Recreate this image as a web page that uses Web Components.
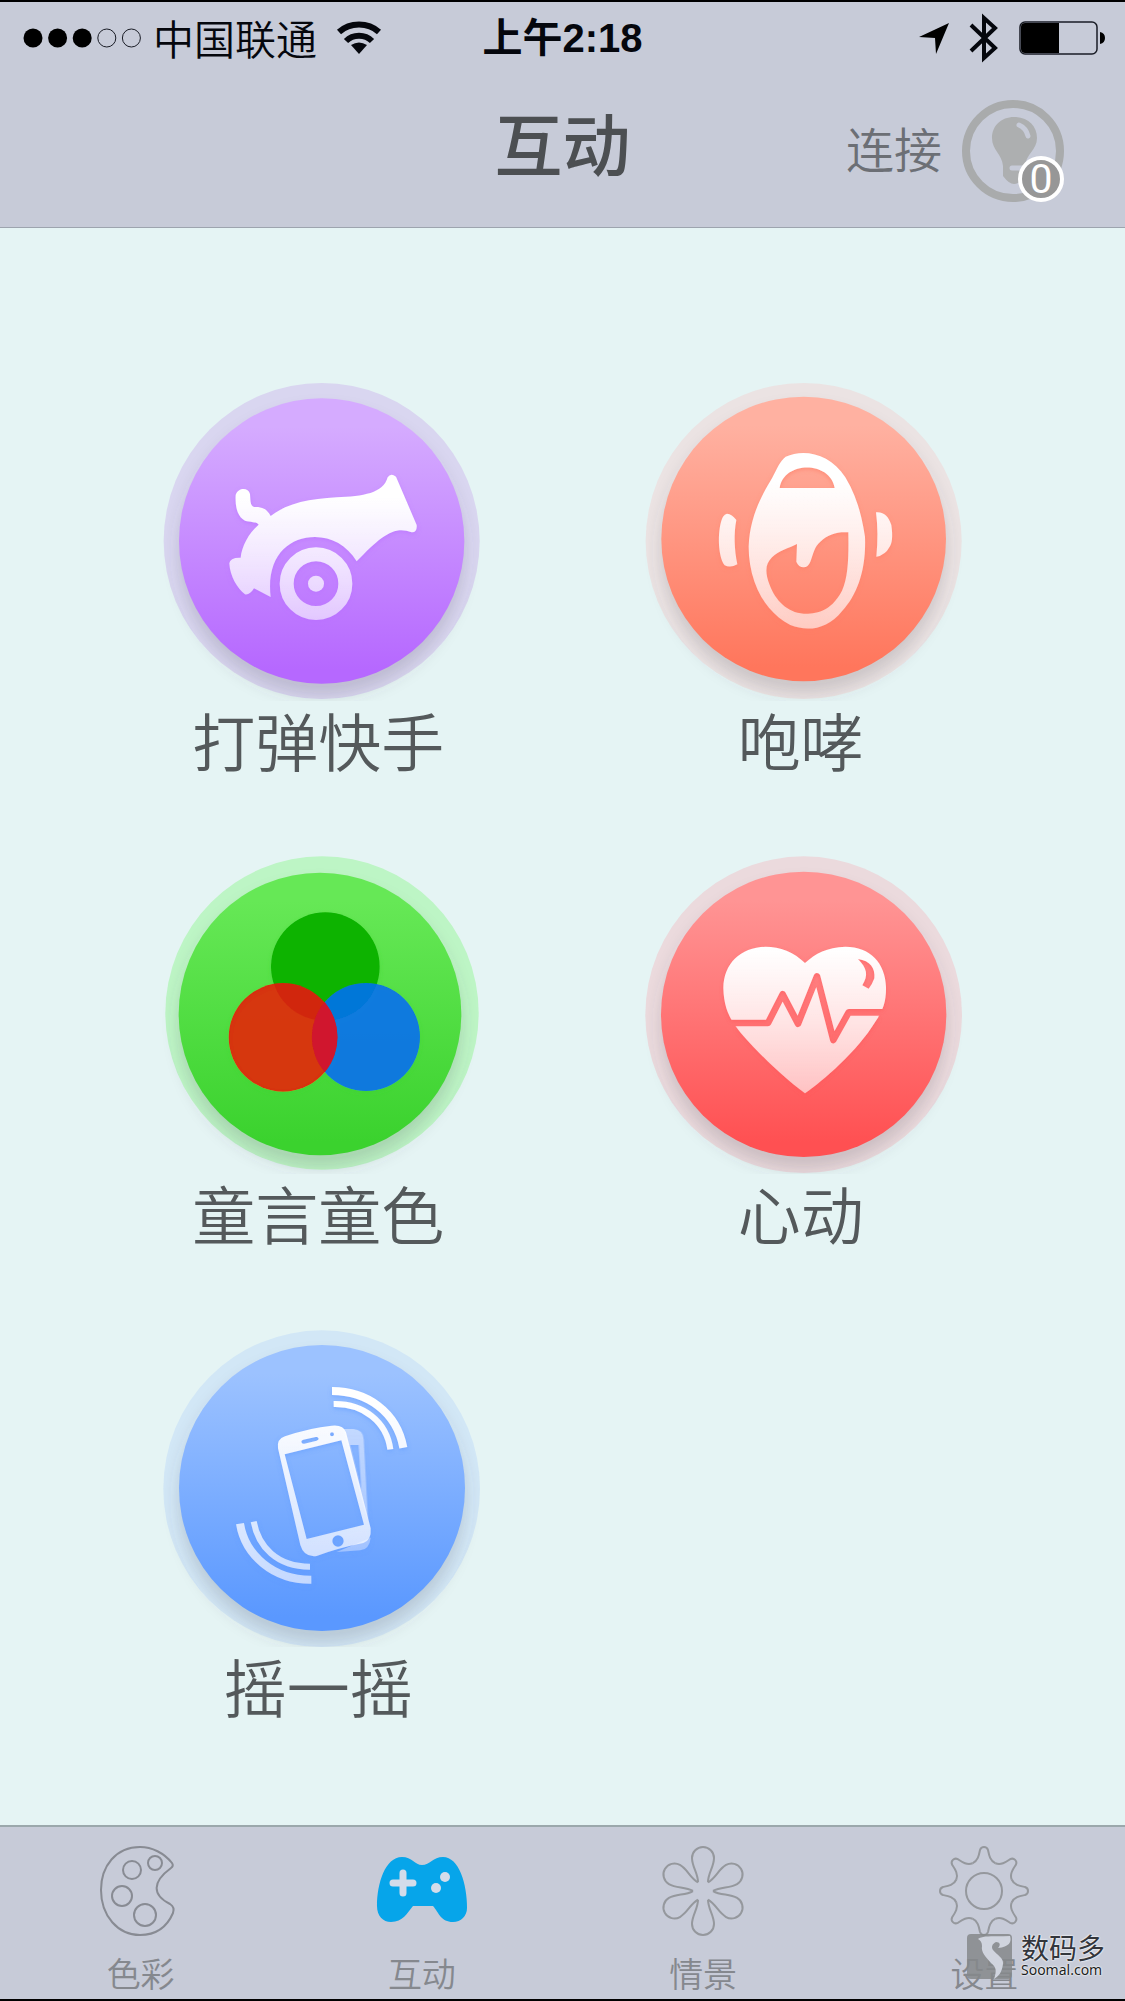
<!DOCTYPE html>
<html lang="zh-CN">
<head>
<meta charset="utf-8">
<meta name="viewport" content="width=device-width, initial-scale=1">
<title>互动</title>
<style>
    body {
        margin: 0;
        background: #000;
        font-family: "Noto Sans CJK SC", "Liberation Sans", sans-serif;
    }
</style>
</head>
<body>
<app-screen>
    <status-bar slot="top" carrier="中国联通" time="上午2:18"></status-bar>
    <nav-bar slot="top" count="0">
        互动
        <span slot="action">连接</span>
    </nav-bar>
    <game-tile icon="cannon">打弹快手</game-tile>
    <game-tile icon="roar">咆哮</game-tile>
    <game-tile icon="colors">童言童色</game-tile>
    <game-tile icon="heart">心动</game-tile>
    <game-tile icon="shake">摇一摇</game-tile>
    <tab-item slot="tabs" icon="palette">色彩</tab-item>
    <tab-item slot="tabs" icon="gamepad" active>互动</tab-item>
    <tab-item slot="tabs" icon="flower">情景</tab-item>
    <tab-item slot="tabs" icon="gear">设置</tab-item>
    <site-mark slot="mark" site="Soomal.com">数码多</site-mark>
</app-screen>

<script>
const spin = (d, n) => Array.from({length: n}, (_, i) =>
    `<path d="${d}" transform="rotate(${i * 360 / n})"/>`).join('')

// art for the round tiles: box, ring and disc are [cx, cy, r]
const tiles = {
    cannon: {
        box: '36 39 954 954', ring: [515, 513, 474], disc: [515, 513, 428],
        halo: '#d9d6f0', from: '#d5abff', to: '#b668ff', fade: [380, 760],
        art: `
            <path fill="url(#ink)" d="M362 438C410 400 480 386 560 382C640 379 700 370 713 322Q722 308 738 320L800 465Q802 488 785 487C735 466 695 495 620 574C590 525 545 501 495 501C415 501 348 560 362 681L312 655Q300 675 285 673C262 655 240 620 238 580Q240 562 272 563C275 530 295 490 326 464C320 455 300 456 285 452C262 440 255 410 257 375C265 352 295 352 300 372C302 395 300 405 312 411C335 410 350 415 362 438Z"/>
            <circle cx="498" cy="641" r="88" fill="none" stroke="url(#ink)" stroke-width="42"/>
            <circle cx="498" cy="641" r="24" fill="url(#ink)"/>`
    },
    roar: {
        box: '44 39 954 954', ring: [520, 513, 474], disc: [520, 507, 427],
        halo: '#ebe3e3', from: '#ffb1a1', to: '#ff765c', fade: [330, 790],
        art: `
            <path fill="url(#ink)" fill-rule="evenodd" d="M466 260C520 235 600 250 645 322C680 380 695 440 704 500C708 600 680 675 636 722C590 780 530 785 480 765C400 725 355 630 355 530C358 440 395 375 425 325C440 295 450 272 466 260Z
                M448 354C460 272 600 272 613 354Z
                M500 522L498 575Q505 592 520 592Q533 592 540 575C550 550 552 530 570 515C595 492 620 485 654 487C655 550 655 620 635 662C600 728 555 731 520 731C470 728 435 690 418 645C403 605 405 582 425 562C445 542 475 535 500 522Z"/>
            <path fill="url(#ink)" d="M290 431Q305 432 318 450C310 490 312 540 321 583Q300 595 283 586C260 555 262 470 278 440Q283 432 290 431Z"/>
            <path fill="url(#ink)" d="M737 427C762 425 775 440 783 465C788 500 785 520 778 530Q765 555 738 560Q745 490 737 427Z"/>`
    },
    colors: {
        box: '36 48 954 954', ring: [516, 519, 470], disc: [510, 522, 424],
        halo: '#bdf5c5', from: '#66e856', to: '#3bd22e', fade: [300, 760],
        art: `
            <circle cx="526" cy="380" r="163" fill="#10b303"/>
            <circle cx="648" cy="591" r="162" fill="#0573e6" fill-opacity=".94"/>
            <circle cx="399" cy="592" r="163" fill="#dc2109" fill-opacity=".95"/>
            <path fill="#d0152e" d="M524 486A163 163 0 0 1 524 696A162 162 0 0 1 524 486Z"/>`
    },
    heart: {
        box: '44 48 954 954', ring: [520, 524, 475], disc: [520, 523, 428],
        halo: '#ebdadd', from: '#ff9494', to: '#ff5052', fade: [330, 790],
        art: `
            <mask id="pulse">
                <path fill="#fff" d="M0 0H1000V1000H0Z"/>
                <path fill="none" stroke="#000" stroke-width="20" stroke-linejoin="round" d="M270 549H413L457 463L503 551L560 409L609 600L655 517H800"/>
                <path d="M683 357C720 362 735 385 732 415Q725 435 715 446L696 436C715 405 710 385 683 357Z"/>
            </mask>
            <path fill="url(#ink)" mask="url(#pulse)" d="M524 369C490 335 450 320 405 320C330 322 280 370 279 445C281 520 310 555 350 600C410 665 470 720 524 760C580 720 680 635 735 545C760 510 768 480 767 440C765 370 720 320 645 320C590 322 555 340 524 369Z"/>`
    },
    shake: {
        box: '36 42 954 954', ring: [515, 521, 475], disc: [516, 519, 429],
        halo: '#d2e7f6', from: '#9cc2ff', to: '#5a98ff', fade: [260, 860],
        art: `
            <g fill="url(#ink)" fill-rule="evenodd">
                <path opacity=".5" d="M580 342H610Q640 344 641 374L654 615L640 570L590 380ZM600 390H626L634 525Z"/>
                <path opacity=".5" d="M560 711L662 668Q658 704 630 706Z"/>
                <path d="M384 400Q380 372 405 364Q480 338 545 332Q580 328 588 352L662 640Q665 676 640 684Q560 700 500 723Q462 728 451 690ZM404 418L470 672L642 629L574 376ZM454 380Q455 388 463 386L500 377Q508 374 505 369Q503 365 497 366L460 374Q454 375 454 380ZM540 358A6 6 0 0 0 552 358A6 6 0 0 0 540 358ZM547 678A17 17 0 0 0 581 678A17 17 0 0 0 547 678Z"/>
            </g>
            <g fill="none" stroke="url(#ink)">
                <path stroke-width="24" d="M546 228C650 228 740 290 760 398M270 626C285 720 370 795 484 794"/>
                <path stroke-width="18" d="M551 267C640 265 710 320 721 403M311 620C325 695 380 755 480 755"/>
            </g>`
    }
}

const tabIcons = {
    palette: `
        <g fill="none" stroke="#888b93" stroke-width="2" transform="translate(-2 0)">
            <path d="M78 17C70 7 58 1 46 1C22 1 7 20 7 44C7 70 24 89 46 89C62 89 73 81 79 67Q81 61 76 58C58 49 58 36 77 22Q80 20 78 17Z"/>
            <circle cx="38" cy="24" r="9"/>
            <circle cx="61" cy="17" r="7"/>
            <circle cx="28" cy="50" r="10"/>
            <circle cx="51" cy="69" r="11"/>
        </g>`,
    gamepad: `
        <path fill="#06a5ea" d="M25 11C35 11 38 19 45 19C53 19 56 11 66 11C82 11 90 38 90 62C90 70 84 76 76 76C64 76 62 67 56 60H36C30 67 26 76 14 76C6 76 0 70 0 60C0 38 8 11 25 11Z"/>
        <path fill="none" stroke="#d3dcea" stroke-width="7" stroke-linecap="round" d="M26 27V47M16 37H36"/>
        <circle cx="68" cy="31" r="5" fill="#d3dcea"/>
        <circle cx="59" cy="42" r="5" fill="#d3dcea"/>`,
    flower: `
        <g fill="none" stroke="#95989d" stroke-width="2" transform="translate(45 45)">
            ${spin('M-5 -8.7C-5 -18 -11 -24 -11 -33A11 11 0 0 1 11 -33C11 -24 5 -18 5 -8.7', 6)}
        </g>`,
    gear: `
        <g fill="none" stroke="#95989d" stroke-width="2" transform="translate(45 45)">
            <circle r="18"/>
            ${spin('M-11.5 -27.7C-6 -30 -5 -36 -4 -41Q-3 -44 0 -44Q3 -44 4 -41C5 -36 6 -30 11.5 -27.7', 8)}
        </g>`
}

class AppScreen extends HTMLElement {
    constructor() {
        super();
        this.attachShadow({mode: 'open'});
    }
    getStyle(){
        return `
            <style>
            :host {
                display: flex;
                flex-direction: column;
                box-sizing: border-box;
                min-height: 100vh;
                position: relative;
                border-top: 2px solid #000;
                border-bottom: 2px solid #000;
                background: #e5f4f4;
            }
            header {
                background: #c7cbd8;
                border-bottom: 1px solid #9da4ae;
            }
            main {
                flex: 1;
                display: grid;
                grid-template-columns: 1fr 1fr;
                align-content: start;
                row-gap: 79px;
                padding: 155px 80px 79px;
            }
            footer {
                display: grid;
                grid-template-columns: repeat(4, 1fr);
                background: #c7cbd8;
                border-top: 2px solid #9ba8ac;
            }
            </style>
        `;
    }
    connectedCallback(){
        this.shadowRoot.innerHTML = `
            ${this.getStyle()}
            <header><slot name="top"></slot></header>
            <main><slot></slot></main>
            <footer><slot name="tabs"></slot></footer>
            <slot name="mark"></slot>
        `;
    }
}
customElements.define('app-screen', AppScreen);

class StatusBar extends HTMLElement {
    constructor() {
        super();
        this.attachShadow({mode: 'open'});
    }
    getStyle(){
        return `
            <style>
            :host {
                display: grid;
                grid-template-columns: 1fr auto 1fr;
                align-items: center;
                height: 72px;
                padding: 0 20px;
                color: #05070d;
            }
            div {
                display: flex;
                align-items: center;
            }
            svg {
                display: block;
                overflow: visible;
            }
            .carrier {
                font-size: 41px;
                font-weight: 350;
                line-height: 68px;
                margin: 0 20px 0 11px;
                padding-bottom: 2px;
            }
            .time {
                font-family: "Liberation Sans", "Noto Sans CJK SC", sans-serif;
                font-size: 40px;
                font-weight: 700;
                line-height: 72px;
            }
            .right {
                justify-content: flex-end;
                gap: 21px;
            }
            </style>
        `;
    }
    connectedCallback(){
        const dots = [0, 1, 2, 3, 4].map(i => i < 3
            ? `<circle cx="${13 + i * 24.6}" cy="10" r="9.5"/>`
            : `<circle cx="${13 + i * 24.6}" cy="10" r="9" fill="none" stroke="#1a1d26"/>`).join('')
        this.shadowRoot.innerHTML = `
            ${this.getStyle()}
            <div>
                <svg width="122" height="20">${dots}</svg>
                <span class="carrier">${this.getAttribute('carrier')}</span>
                <svg width="44" height="34" fill="none" stroke="#05070d" stroke-width="6">
                    <path d="M2 11C13 1 31 1 42 11M9 20C16 13 28 13 35 20"/>
                    <path fill="#05070d" stroke="none" d="M14 24Q22 19 30 24L22 33Z"/>
                </svg>
            </div>
            <div class="time">${this.getAttribute('time')}</div>
            <div class="right">
                <svg width="30" height="31"><path d="M30 0L17 31L16 15L0 14Z"/></svg>
                <svg width="28" height="48"><path fill="none" stroke="#05070d" stroke-width="4" d="M1 11L25 34L14 44V4L25 14L1 37"/></svg>
                <svg width="86" height="34">
                    <rect x="1" y="1" width="77" height="32" rx="5" fill="none" stroke="#1a1d26" stroke-width="1.5"/>
                    <path d="M6 2H40V32H6Q2 32 2 28V6Q2 2 6 2ZM81 11Q86 12 86 17Q86 22 81 23Z"/>
                </svg>
            </div>
        `;
    }
}
customElements.define('status-bar', StatusBar);

class NavBar extends HTMLElement {
    constructor() {
        super();
        this.attachShadow({mode: 'open'});
    }
    getStyle(){
        return `
            <style>
            :host {
                display: grid;
                grid-template-columns: 1fr auto 1fr;
                align-items: center;
                height: 153px;
                padding: 0 61px;
            }
            h1 {
                grid-column: 2;
                margin: 0;
                padding-bottom: 18px;
                font-size: 68px;
                font-weight: 500;
                line-height: 80px;
                color: #4c4f52;
            }
            button {
                justify-self: end;
                display: flex;
                align-items: center;
                gap: 20px;
                padding: 0;
                border: 0;
                background: none;
                font: inherit;
                font-size: 48px;
                font-weight: 350;
                line-height: 60px;
                color: #6c6f75;
            }
            .label {
                padding-bottom: 8px;
            }
            .bulb {
                position: relative;
                height: 102px;
            }
            .badge {
                position: absolute;
                right: 0;
                bottom: 0;
                width: 38px;
                height: 38px;
                border: 4px solid #fff;
                border-radius: 50%;
                background: #979797;
                color: #fff;
                font-family: Roboto, "Liberation Sans", sans-serif;
                font-size: 41px;
                font-weight: 400;
                line-height: 38px;
                text-align: center;
            }
            </style>
        `;
    }
    connectedCallback(){
        this.shadowRoot.innerHTML = `
            ${this.getStyle()}
            <h1><slot></slot></h1>
            <button type="button">
                <span class="label"><slot name="action"></slot></span>
                <span class="bulb">
                    <svg width="102" height="102" fill="none">
                        <circle cx="51" cy="51" r="47" stroke="#a9abac" stroke-width="8"/>
                        <path fill="#adafb0" d="M52 17C39 17 30 26 30 38C30 50 40 54 41 66V76Q47 84 52 84Q58 84 63 76V66C64 54 75 50 75 38C75 26 66 17 52 17Z"/>
                        <path stroke="#c7cbd8" stroke-width="5" stroke-linecap="round" d="M57 25Q64 28 66 36M50 68H62"/>
                    </svg>
                    <span class="badge">${this.getAttribute('count')}</span>
                </span>
            </button>
        `;
    }
}
customElements.define('nav-bar', NavBar);

class GameTile extends HTMLElement {
    constructor() {
        super();
        this.attachShadow({mode: 'open'});
    }
    getStyle(){
        return `
            <style>
            :host {
                display: flex;
                justify-content: center;
            }
            button {
                display: flex;
                flex-direction: column;
                align-items: center;
                padding: 0;
                border: 0;
                background: none;
                font: inherit;
                font-size: 63px;
                font-weight: 350;
                line-height: 76px;
                color: #54595b;
            }
            svg {
                display: block;
                width: 318px;
                height: 318px;
            }
            .label {
                padding-right: 6px;
            }
            </style>
        `;
    }
    connectedCallback(){
        const t = tiles[this.getAttribute('icon')]
        const circle = ([x, y, r], rest) => `<circle cx="${x}" cy="${y}" r="${r}" ${rest}/>`
        this.shadowRoot.innerHTML = `
            ${this.getStyle()}
            <button type="button">
                <svg viewBox="${t.box}">
                    <defs>
                        <linearGradient id="disc" x2="0" y2="1">
                            <stop offset=".1" stop-color="${t.from}"/>
                            <stop offset=".95" stop-color="${t.to}"/>
                        </linearGradient>
                        <linearGradient id="ink" gradientUnits="userSpaceOnUse" x1="0" x2="0" y1="${t.fade[0]}" y2="${t.fade[1]}">
                            <stop offset="0" stop-color="#fff"/>
                            <stop offset="1" stop-color="#fff" stop-opacity=".55"/>
                        </linearGradient>
                        <filter id="soft" x="-20%" y="-20%" width="140%" height="140%">
                            <feGaussianBlur stdDeviation="24"/>
                        </filter>
                        <filter id="lift">
                            <feDropShadow dx="0" dy="6" stdDeviation="6" flood-color="${t.to}" flood-opacity=".5"/>
                        </filter>
                    </defs>
                    ${circle(t.ring, `fill="${t.halo}"`)}
                    <g transform="translate(0 36)">${circle(t.disc, 'fill="#4a4a5a" fill-opacity=".2" filter="url(#soft)"')}</g>
                    ${circle(t.disc, 'fill="url(#disc)"')}
                    <g filter="url(#lift)">${t.art}</g>
                </svg>
                <span class="label"><slot></slot></span>
            </button>
        `;
    }
}
customElements.define('game-tile', GameTile);

class TabItem extends HTMLElement {
    constructor() {
        super();
        this.attachShadow({mode: 'open'});
    }
    getStyle(){
        return `
            <style>
            :host {
                display: block;
            }
            button {
                display: flex;
                flex-direction: column;
                align-items: center;
                gap: 17px;
                width: 100%;
                padding: 19px 0 6px;
                border: 0;
                background: none;
                font: inherit;
                font-size: 34px;
                font-weight: 350;
                line-height: 40px;
                color: #85888e;
            }
            svg {
                display: block;
                overflow: visible;
            }
            </style>
        `;
    }
    connectedCallback(){
        this.shadowRoot.innerHTML = `
            ${this.getStyle()}
            <button type="button" ${this.hasAttribute('active') ? 'aria-current="page"' : ''}>
                <svg width="90" height="90">${tabIcons[this.getAttribute('icon')]}</svg>
                <slot></slot>
            </button>
        `;
    }
}
customElements.define('tab-item', TabItem);

class SiteMark extends HTMLElement {
    constructor() {
        super();
        this.attachShadow({mode: 'open'});
    }
    getStyle(){
        return `
            <style>
            :host {
                position: absolute;
                right: 20px;
                bottom: 20px;
                display: flex;
                align-items: center;
                gap: 9px;
                color: #33363c;
                text-shadow: 0 0 2px #fff, 0 0 2px #fff;
            }
            .name {
                font-size: 28px;
                line-height: 28px;
            }
            .site {
                font-family: "Noto Sans", sans-serif;
                font-size: 14px;
                line-height: 18px;
                color: #1c1e22;
            }
            </style>
        `;
    }
    connectedCallback(){
        this.shadowRoot.innerHTML = `
            ${this.getStyle()}
            <svg width="45" height="45">
                <rect width="45" height="45" rx="4" fill="#85888b" fill-opacity=".85"/>
                <path fill="#d0d4de" d="M11 5C16 1 30 3 43 2C45 8 42 13 31 14C34 11 33 8 29 8C25 10 24 13 26 16C30 21 37 24 36 30C35 38 32 42 27 45C30 36 29 33 24 29C18 22 14 18 15 12Q15 7 11 5Z"/>
            </svg>
            <div>
                <div class="name"><slot></slot></div>
                <div class="site">${this.getAttribute('site')}</div>
            </div>
        `;
    }
}
customElements.define('site-mark', SiteMark);
</script>
</body>
</html>
